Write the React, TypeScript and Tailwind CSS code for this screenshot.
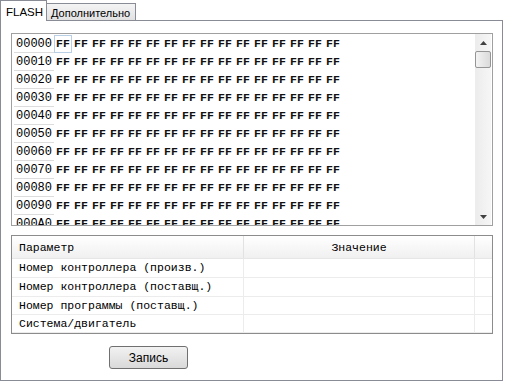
import React from "react";

const rows = ["00000","00010","00020","00030","00040","00050","00060","00070","00080","00090","000A0"];
const cells = Array.from({ length: 16 }, (_, i) => i);
const params = [
  "Номер контроллера (произв.)",
  "Номер контроллера (поставщ.)",
  "Номер программы (поставщ.)",
  "Система/двигатель",
];

export default function App() {
  return (
    <div className="w-[505px] h-[382px] bg-white" style={{ fontFamily: '"Liberation Sans", Arial, sans-serif' }}>
      <div className="flex items-end h-[21px]">
        <div className="relative z-10 h-[21px] w-[47px] border border-b-0 border-[#898c95] bg-white text-[11.5px] text-black pl-[5px] pt-[4px] leading-[14px]">
          FLASH
        </div>
        <div className="h-[18px] w-[89px] border border-l-0 border-[#898c95] bg-gradient-to-b from-[#f4f4f4] to-[#e2e2e2] text-[11px] text-black pl-[4px] pt-[2px] leading-[14px] whitespace-nowrap">
          Дополнительно
        </div>
      </div>
      <div className="-mt-[1px] w-[503px] h-[361px] border border-[#898c95] bg-white pl-[10px] pt-[12px]">
        <div className="w-[482px] h-[193px] border border-[#a0a0a0] flex overflow-hidden" style={{ fontFamily: '"Liberation Mono", "Courier New", monospace' }}>
          <div className="flex-1 pt-[1px] pl-[2px] overflow-hidden">
            {rows.map((r, ri) => (
              <div key={r} className="flex h-[18px] items-center text-[12px] text-black">
                <div className="w-[40px] h-[18px] pl-[2px] leading-[18px] border-b border-[#dcdcdc]">{r}</div>
                {cells.map((c) => (
                  <div
                    key={c}
                    className={
                      "w-[18px] h-[18px] leading-[16px] pl-[1px] font-bold text-[11.5px] text-[#111] " +
                      (ri === 0 && c === 0 ? "border border-[#b8cfe6]" : "border border-transparent")
                    }
                  >
                    FF
                  </div>
                ))}
              </div>
            ))}
          </div>
          <div className="w-[16px] mr-[1px] h-full bg-gradient-to-r from-[#ececec] to-[#f6f6f6] flex flex-col items-center">
            <div className="h-[17px] w-full flex items-center justify-center">
              <svg width="7" height="4" viewBox="0 0 7 4"><path d="M0 4 L3.5 0 L7 4 Z" fill="#404040" /></svg>
            </div>
            <div className="w-[16px] h-[17px] border border-[#959595] rounded-[2px] bg-gradient-to-r from-[#f3f3f3] to-[#dadada]" />
            <div className="flex-1" />
            <div className="h-[17px] w-full flex items-center justify-center">
              <svg width="7" height="4" viewBox="0 0 7 4"><path d="M0 0 L3.5 4 L7 0 Z" fill="#404040" /></svg>
            </div>
          </div>
        </div>
        <div className="mt-[9px] w-[482px] h-[99px] border border-[#8c8c8c] flex flex-col" style={{ fontFamily: '"Liberation Mono", "Courier New", monospace' }}>
          <div className="flex h-[23px] bg-gradient-to-b from-[#ffffff] to-[#f0f0f0] border-b border-[#e6e6e6] text-[11.5px] text-black">
            <div className="w-[232px] pl-[7px] leading-[23px] border-r border-[#e2e2e2]">Параметр</div>
            <div className="w-[231px] text-center leading-[23px] border-r border-[#e2e2e2]">Значение</div>
            <div className="flex-1" />
          </div>
          {params.map((p, i) => (
            <div key={p} className={"flex text-[11.5px] text-black border-b border-[#ececec] " + (i < 2 ? "h-[19px]" : "h-[18px]")}>
              <div className="w-[232px] pl-[7px] leading-[18px] border-r border-[#ececec] whitespace-nowrap">{p}</div>
              <div className="w-[231px] border-r border-[#ececec]" />
              <div className="flex-1" />
            </div>
          ))}
        </div>
        <div className="mt-[12px] ml-[98px] w-[79px] h-[23px] rounded-[3px] border border-[#707070] bg-gradient-to-b from-[#f2f2f2] to-[#d9d9d9] text-[12px] text-black flex items-center justify-center">
          Запись
        </div>
      </div>
    </div>
  );
}
